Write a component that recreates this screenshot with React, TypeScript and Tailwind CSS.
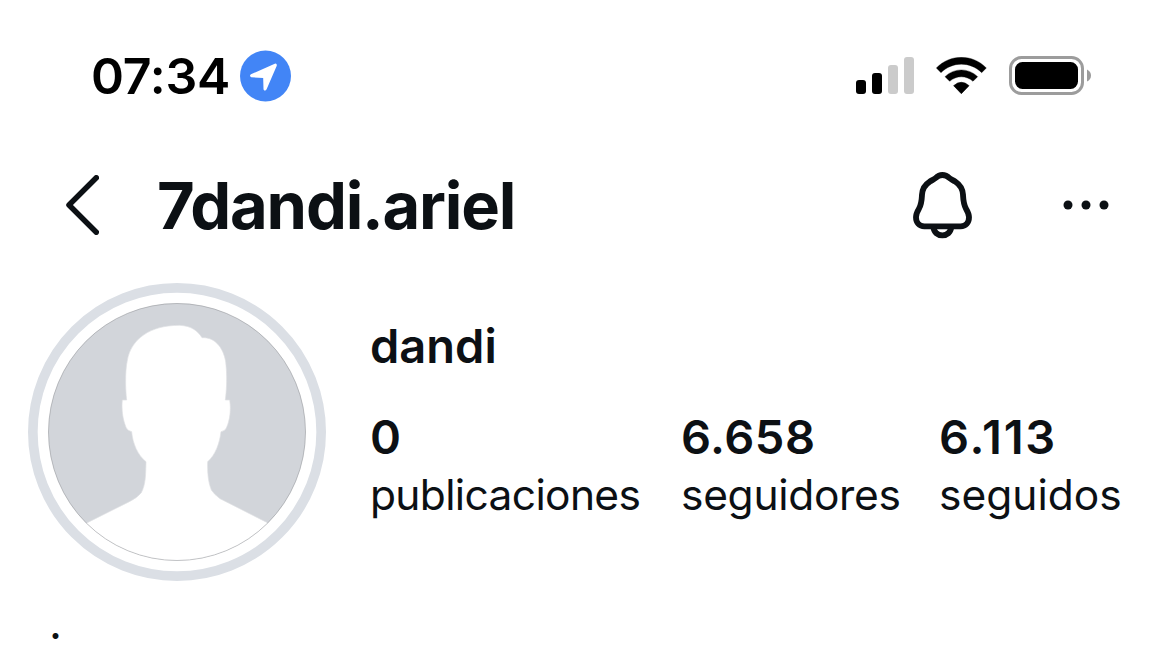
const Signal = () => (
  <svg width="58" height="38" viewBox="0 0 58 38">
    <rect x="0" y="23" width="10" height="14" rx="3" fill="#000" />
    <rect x="16" y="16" width="10" height="21" rx="3" fill="#000" />
    <rect x="32" y="8" width="10" height="29" rx="3" fill="#cbcbcb" />
    <rect x="48" y="0" width="10" height="37" rx="3" fill="#cbcbcb" />
  </svg>
);

const Wifi = () => (
  <svg width="51" height="38" viewBox="274 36 153 114">
    <path d="M275 69C317 26 383 26 425 69L411 83C377 49 323 49 289 83Z" fill="#000" stroke="#000" strokeWidth="1" strokeLinejoin="round" />
    <path d="M301 95C329 68 371 68 399 95L385 109C365 91 335 91 315 109Z" fill="#000" stroke="#000" strokeWidth="1" strokeLinejoin="round" />
    <path d="M327 122Q350 102 373 122L350 146Z" fill="#000" stroke="#000" strokeWidth="2" strokeLinejoin="round" />
  </svg>
);

const Battery = () => (
  <svg width="82" height="40" viewBox="0 0 82 40">
    <rect x="1.5" y="1.5" width="72" height="36" rx="11" fill="none" stroke="#9c9c9c" strokeWidth="3" />
    <rect x="6" y="6" width="63" height="27" rx="7.5" fill="#000" />
    <path d="M78 13.5Q82 15.500 82 19.500T78 25.500Z" fill="#9c9c9c" />
  </svg>
);

const Location = () => (
  <svg width="51" height="52" viewBox="480 30 154 156">
    <circle cx="557" cy="108" r="77" fill="#4285f6" />
    <path d="M513 103L585 71Q592 69 591 77L560 149Q555 156 551 149L550 114L514 112Q507 108 513 103Z" fill="#fff" />
  </svg>
);

const Bell = () => (
  <svg width="60" height="67" viewBox="38 35 180 201" fill="none" stroke="#0c1014" strokeWidth="17.5" strokeLinejoin="round">
    <path d="M126 44C117 44 112 47 106 53C102 57 95 59 88 64C72 74 66 87 65 103C64 123 64 131 56 145C50 155 47 161 47 171C47 187 57 198 72 198H181C196 198 206 187 206 171C206 161 203 155 197 145C189 131 189 123 188 103C187 87 180 74 165 64C158 59 151 57 147 53C141 47 136 44 126 44Z" />
    <path d="M99 199C101 217 112 225 126 225S151 217 153 199" />
  </svg>
);

const Avatar = () => (
  <svg width="298" height="298" viewBox="24 24 894 894" className="shrink-0">
    <defs>
      <clipPath id="avatar-clip">
        <circle cx="471" cy="471" r="386" />
      </clipPath>
    </defs>
    <circle cx="471" cy="471" r="432.500" fill="#fff" stroke="#dbdfe5" strokeWidth="29" />
    <circle cx="471" cy="471" r="386" fill="#d2d5da" />
    <g clipPath="url(#avatar-clip)">
      <path
        d="M320 375C316 340 315 290 322 256C333 193 390 150 480 151C513 153 532 166 546 188C585 186 610 218 617 260C622 300 620 345 616 375H629C634 405 629 438 619 459Q615 468 603 470C599 505 586 540 563 560C562 590 564 620 574 645Q582 658 600 671L742 743L870 810V870H70V810L202 743L328 680Q352 668 364 653C377 628 377 600 378 560C353 540 338 505 335 470Q323 468 318 457C308 433 304 402 307 375Z"
        fill="#fff"
        stroke="#dfe1e4"
        strokeWidth="2"
      />
    </g>
    <circle cx="471" cy="471" r="385.500" fill="none" stroke="#8c8e92" strokeOpacity=".6" strokeWidth="2.500" />
  </svg>
);

type StatProps = { value: string; label: string; className: string; valueClass: string; labelClass: string };

function Stat({ value, label, className, valueClass, labelClass }: StatProps) {
  return (
    <div className={className}>
      <div className={`text-[47px] leading-[58px] font-semibold ${valueClass}`}>{value}</div>
      <div className={`text-[42.5px] ${labelClass}`}>{label}</div>
    </div>
  );
}

export default function App() {
  return (
    <main className="h-[659px] w-[1169px] overflow-hidden bg-white font-['Inter',sans-serif] whitespace-nowrap text-[#0c1014]">
      <div className="flex h-[152px] items-center pr-[78px] pl-[91px] text-black">
        <span className="w-[149px] text-[50px] leading-none font-semibold tracking-[-0.2px]">07:34</span>
        <Location />
        <div className="ml-auto flex items-center">
          <Signal />
          <div className="ml-[22px]"><Wifi /></div>
          <div className="ml-[22px]"><Battery /></div>
        </div>
      </div>
      <header className="flex h-[106px] items-center pr-[60px] pl-[66px]">
        <svg width="33" height="60" viewBox="0 0 33 60" fill="none" stroke="#0c1014" strokeWidth="5.500" strokeLinecap="round" strokeLinejoin="round">
          <path d="M30.300 2.800L3 30L30.300 57.200" />
        </svg>
        <h1 className="ml-[58px] text-[65px] leading-none font-bold tracking-[-1.2px]">7dandi.ariel</h1>
        <div className="ml-auto flex items-center">
          <Bell />
          <svg width="46" height="10" viewBox="0 0 46 10" className="ml-[90px]" fill="#0c1014">
            <circle cx="5" cy="5" r="4.500" />
            <circle cx="23" cy="5" r="4.500" />
            <circle cx="41" cy="5" r="4.500" />
          </svg>
        </div>
      </header>
      <section className="flex h-[336px] pt-[25px] pl-7">
        <Avatar />
        <div className="pt-[35px] pl-11">
          <h2 className="text-[47px] leading-[56px] font-semibold">dandi</h2>
          <div className="mt-[34px] flex">
            <Stat value="0" label="publicaciones" className="w-[311px]" valueClass="tracking-normal" labelClass="leading-[57px] tracking-[-0.65px]" />
            <Stat value="6.658" label="seguidores" className="w-[258px]" valueClass="tracking-[0.5px]" labelClass="leading-[57px] tracking-[-0.3px]" />
            <Stat value="6.113" label="seguidos" className="w-[190px]" valueClass="tracking-[1.8px]" labelClass="leading-[58px] tracking-normal" />
          </div>
        </div>
      </section>
      <p className="pl-[49px] text-[45px] leading-[58px]">.</p>
    </main>
  );
}
